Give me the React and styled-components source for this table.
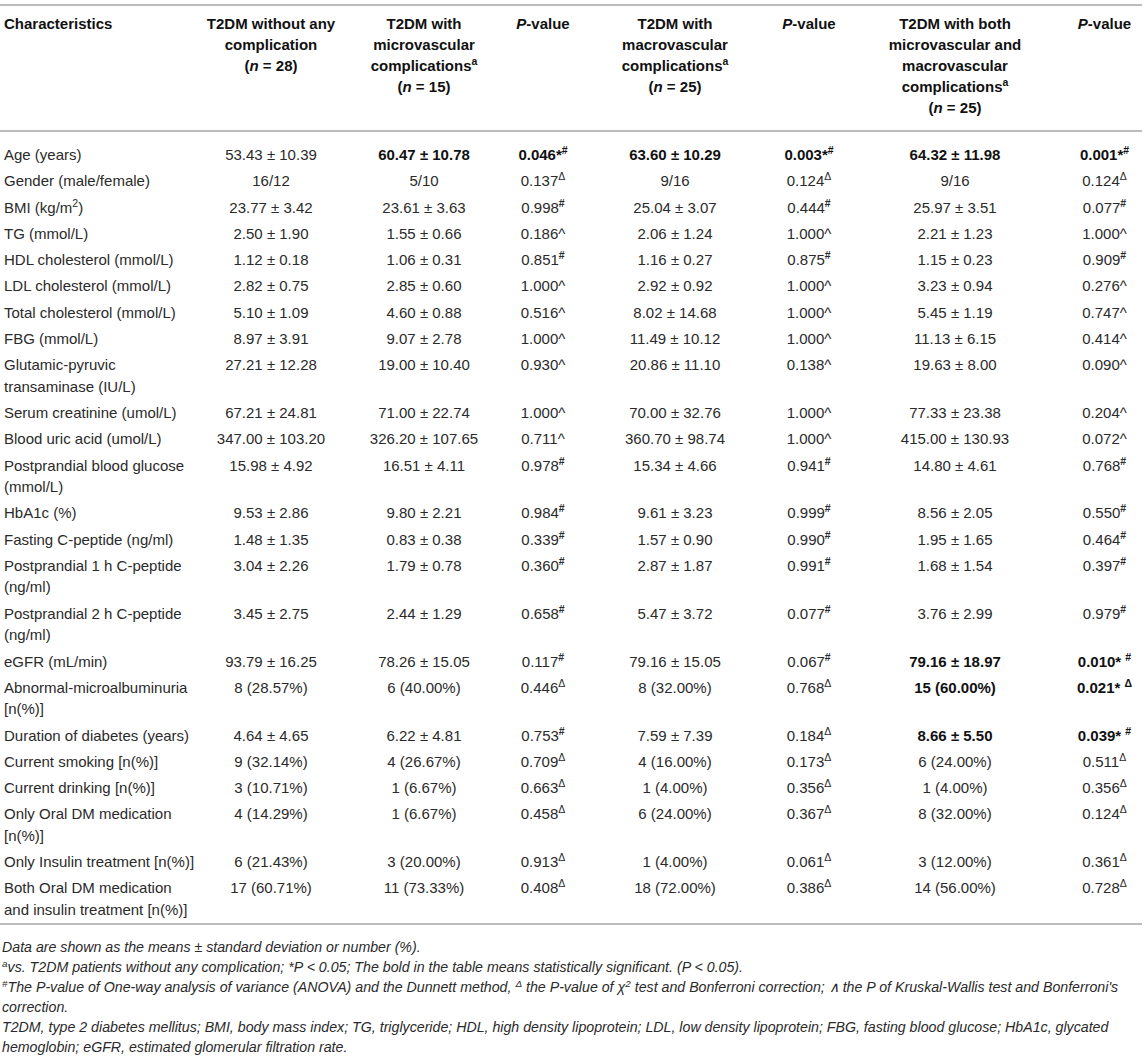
import React from 'react';
import styled, { createGlobalStyle } from 'styled-components';

const GlobalStyle = createGlobalStyle`
  body {
    margin: 0;
    background: #fff;
    font-family: "Liberation Sans", Arial, sans-serif;
  }
`;

const Page = styled.div`
  padding: 4px 2px 0 0;
  color: #2a2a2a;
`;

const Table = styled.table`
  width: 100%;
  table-layout: fixed;
  border-collapse: collapse;
  font-size: 15px;
  border-top: 2px solid #bdbdbd;
  border-bottom: 2px solid #bdbdbd;
`;

const Col = styled.col`
  width: ${({ $w }) => $w}px;
`;

const Th = styled.th`
  text-align: ${({ $left }) => ($left ? 'left' : 'center')};
  vertical-align: top;
  font-weight: 700;
  color: #111;
  line-height: 21px;
  padding: 7px ${({ $px }) => $px}px 12px;
  border-bottom: 2px solid #bdbdbd;
`;

const Body = styled.tbody`
  tr:first-child td {
    padding-top: 12px;
  }
`;

const Td = styled.td`
  text-align: center;
  vertical-align: top;
  line-height: 21.5px;
  padding: 2.4px 0;
  white-space: nowrap;
  font-weight: ${({ $bold }) => ($bold ? 700 : 400)};
  color: ${({ $bold }) => ($bold ? '#111' : '#2a2a2a')};
`;

const Label = styled(Td)`
  text-align: left;
  white-space: normal;
  padding-left: 4px;
  padding-right: 8px;
`;

const Sup = styled.sup`
  font-size: 0.7em;
  line-height: 0;
  vertical-align: 0.55em;
  font-weight: ${({ $heavy }) => ($heavy ? 700 : 'inherit')};
`;

const Notes = styled.div`
  padding: 12px 0 0 2px;
  font-size: 14.2px;
  font-style: italic;
  line-height: 20px;

  p {
    margin: 0;
  }
`;

// column widths, plus side padding of the header cell so the titles wrap like the print
const cols = [
  { w: 205, hp: 4 },
  { w: 132, hp: 0 },
  { w: 174, hp: 12 },
  { w: 64, hp: 0 },
  { w: 200, hp: 25 },
  { w: 68, hp: 0 },
  { w: 224, hp: 37 },
  { w: 75, hp: 0 },
];

const rows = [
  { label: 'Age (years)', cells: [
    { v: '53.43 ± 10.39' }, { v: '60.47 ± 10.78', b: true }, { v: '0.046', star: '*', m: '#', b: true },
    { v: '63.60 ± 10.29', b: true }, { v: '0.003', star: '*', m: '#', b: true },
    { v: '64.32 ± 11.98', b: true }, { v: '0.001', star: '*', m: '#', b: true },
  ] },
  { label: 'Gender (male/female)', cells: [
    { v: '16/12' }, { v: '5/10' }, { v: '0.137', m: 'Δ' },
    { v: '9/16' }, { v: '0.124', m: 'Δ' }, { v: '9/16' }, { v: '0.124', m: 'Δ' },
  ] },
  { label: <>BMI (kg/m<Sup>2</Sup>)</>, cells: [
    { v: '23.77 ± 3.42' }, { v: '23.61 ± 3.63' }, { v: '0.998', m: '#' },
    { v: '25.04 ± 3.07' }, { v: '0.444', m: '#' }, { v: '25.97 ± 3.51' }, { v: '0.077', m: '#' },
  ] },
  { label: 'TG (mmol/L)', cells: [
    { v: '2.50 ± 1.90' }, { v: '1.55 ± 0.66' }, { v: '0.186^' },
    { v: '2.06 ± 1.24' }, { v: '1.000^' }, { v: '2.21 ± 1.23' }, { v: '1.000^' },
  ] },
  { label: 'HDL cholesterol (mmol/L)', cells: [
    { v: '1.12 ± 0.18' }, { v: '1.06 ± 0.31' }, { v: '0.851', m: '#' },
    { v: '1.16 ± 0.27' }, { v: '0.875', m: '#' }, { v: '1.15 ± 0.23' }, { v: '0.909', m: '#' },
  ] },
  { label: 'LDL cholesterol (mmol/L)', cells: [
    { v: '2.82 ± 0.75' }, { v: '2.85 ± 0.60' }, { v: '1.000^' },
    { v: '2.92 ± 0.92' }, { v: '1.000^' }, { v: '3.23 ± 0.94' }, { v: '0.276^' },
  ] },
  { label: 'Total cholesterol (mmol/L)', cells: [
    { v: '5.10 ± 1.09' }, { v: '4.60 ± 0.88' }, { v: '0.516^' },
    { v: '8.02 ± 14.68' }, { v: '1.000^' }, { v: '5.45 ± 1.19' }, { v: '0.747^' },
  ] },
  { label: 'FBG (mmol/L)', cells: [
    { v: '8.97 ± 3.91' }, { v: '9.07 ± 2.78' }, { v: '1.000^' },
    { v: '11.49 ± 10.12' }, { v: '1.000^' }, { v: '11.13 ± 6.15' }, { v: '0.414^' },
  ] },
  { label: 'Glutamic-pyruvic transaminase (IU/L)', cells: [
    { v: '27.21 ± 12.28' }, { v: '19.00 ± 10.40' }, { v: '0.930^' },
    { v: '20.86 ± 11.10' }, { v: '0.138^' }, { v: '19.63 ± 8.00' }, { v: '0.090^' },
  ] },
  { label: 'Serum creatinine (umol/L)', cells: [
    { v: '67.21 ± 24.81' }, { v: '71.00 ± 22.74' }, { v: '1.000^' },
    { v: '70.00 ± 32.76' }, { v: '1.000^' }, { v: '77.33 ± 23.38' }, { v: '0.204^' },
  ] },
  { label: 'Blood uric acid (umol/L)', cells: [
    { v: '347.00 ± 103.20' }, { v: '326.20 ± 107.65' }, { v: '0.711^' },
    { v: '360.70 ± 98.74' }, { v: '1.000^' }, { v: '415.00 ± 130.93' }, { v: '0.072^' },
  ] },
  { label: 'Postprandial blood glucose (mmol/L)', cells: [
    { v: '15.98 ± 4.92' }, { v: '16.51 ± 4.11' }, { v: '0.978', m: '#' },
    { v: '15.34 ± 4.66' }, { v: '0.941', m: '#' }, { v: '14.80 ± 4.61' }, { v: '0.768', m: '#' },
  ] },
  { label: 'HbA1c (%)', cells: [
    { v: '9.53 ± 2.86' }, { v: '9.80 ± 2.21' }, { v: '0.984', m: '#' },
    { v: '9.61 ± 3.23' }, { v: '0.999', m: '#' }, { v: '8.56 ± 2.05' }, { v: '0.550', m: '#' },
  ] },
  { label: 'Fasting C-peptide (ng/ml)', cells: [
    { v: '1.48 ± 1.35' }, { v: '0.83 ± 0.38' }, { v: '0.339', m: '#' },
    { v: '1.57 ± 0.90' }, { v: '0.990', m: '#' }, { v: '1.95 ± 1.65' }, { v: '0.464', m: '#' },
  ] },
  { label: 'Postprandial 1 h C-peptide (ng/ml)', cells: [
    { v: '3.04 ± 2.26' }, { v: '1.79 ± 0.78' }, { v: '0.360', m: '#' },
    { v: '2.87 ± 1.87' }, { v: '0.991', m: '#' }, { v: '1.68 ± 1.54' }, { v: '0.397', m: '#' },
  ] },
  { label: 'Postprandial 2 h C-peptide (ng/ml)', cells: [
    { v: '3.45 ± 2.75' }, { v: '2.44 ± 1.29' }, { v: '0.658', m: '#' },
    { v: '5.47 ± 3.72' }, { v: '0.077', m: '#' }, { v: '3.76 ± 2.99' }, { v: '0.979', m: '#' },
  ] },
  { label: 'eGFR (mL/min)', cells: [
    { v: '93.79 ± 16.25' }, { v: '78.26 ± 15.05' }, { v: '0.117', m: '#' },
    { v: '79.16 ± 15.05' }, { v: '0.067', m: '#' }, { v: '79.16 ± 18.97', b: true }, { v: '0.010', star: '* ', m: '#', b: true },
  ] },
  { label: 'Abnormal-microalbuminuria [n(%)]', cells: [
    { v: '8 (28.57%)' }, { v: '6 (40.00%)' }, { v: '0.446', m: 'Δ' },
    { v: '8 (32.00%)' }, { v: '0.768', m: 'Δ' }, { v: '15 (60.00%)', b: true }, { v: '0.021', star: '* ', m: 'Δ', b: true },
  ] },
  { label: 'Duration of diabetes (years)', cells: [
    { v: '4.64 ± 4.65' }, { v: '6.22 ± 4.81' }, { v: '0.753', m: '#' },
    { v: '7.59 ± 7.39' }, { v: '0.184', m: 'Δ' }, { v: '8.66 ± 5.50', b: true }, { v: '0.039', star: '* ', m: '#', b: true },
  ] },
  { label: 'Current smoking [n(%)]', cells: [
    { v: '9 (32.14%)' }, { v: '4 (26.67%)' }, { v: '0.709', m: 'Δ' },
    { v: '4 (16.00%)' }, { v: '0.173', m: 'Δ' }, { v: '6 (24.00%)' }, { v: '0.511', m: 'Δ' },
  ] },
  { label: 'Current drinking [n(%)]', cells: [
    { v: '3 (10.71%)' }, { v: '1 (6.67%)' }, { v: '0.663', m: 'Δ' },
    { v: '1 (4.00%)' }, { v: '0.356', m: 'Δ' }, { v: '1 (4.00%)' }, { v: '0.356', m: 'Δ' },
  ] },
  { label: 'Only Oral DM medication [n(%)]', cells: [
    { v: '4 (14.29%)' }, { v: '1 (6.67%)' }, { v: '0.458', m: 'Δ' },
    { v: '6 (24.00%)' }, { v: '0.367', m: 'Δ' }, { v: '8 (32.00%)' }, { v: '0.124', m: 'Δ' },
  ] },
  { label: 'Only Insulin treatment [n(%)]', cells: [
    { v: '6 (21.43%)' }, { v: '3 (20.00%)' }, { v: '0.913', m: 'Δ' },
    { v: '1 (4.00%)' }, { v: '0.061', m: 'Δ' }, { v: '3 (12.00%)' }, { v: '0.361', m: 'Δ' },
  ] },
  { label: 'Both Oral DM medication and insulin treatment [n(%)]', cells: [
    { v: '17 (60.71%)' }, { v: '11 (73.33%)' }, { v: '0.408', m: 'Δ' },
    { v: '18 (72.00%)' }, { v: '0.386', m: 'Δ' }, { v: '14 (56.00%)' }, { v: '0.728', m: 'Δ' },
  ] },
];

const N = ({ n }) => (
  <>
    (<i>n</i> = {n})
  </>
);

const PHead = () => (
  <>
    <i>P</i>-value
  </>
);

const headers = [
  'Characteristics',
  <>
    T2DM without any complication
    <br />
    <N n={28} />
  </>,
  <>
    T2DM with microvascular complications<Sup>a</Sup>
    <br />
    <N n={15} />
  </>,
  <PHead />,
  <>
    T2DM with macrovascular complications<Sup>a</Sup>
    <br />
    <N n={25} />
  </>,
  <PHead />,
  <>
    T2DM with both microvascular and macrovascular complications<Sup>a</Sup>
    <br />
    <N n={25} />
  </>,
  <PHead />,
];

const App = () => {
  return (
    <Page>
      <GlobalStyle />
      <Table>
        <colgroup>
          {cols.map((c, i) => (
            <Col key={i} $w={c.w} />
          ))}
        </colgroup>
        <thead>
          <tr>
            {headers.map((h, i) => (
              <Th key={i} $left={i === 0} $px={cols[i].hp}>
                {h}
              </Th>
            ))}
          </tr>
        </thead>
        <Body>
          {rows.map((r, i) => (
            <tr key={i}>
              <Label>{r.label}</Label>
              {r.cells.map((c, j) => (
                <Td key={j} $bold={c.b}>
                  {c.v}
                  {c.star}
                  {c.m && <Sup $heavy={c.m === '#'}>{c.m}</Sup>}
                </Td>
              ))}
            </tr>
          ))}
        </Body>
      </Table>
      <Notes>
        <p>Data are shown as the means ± standard deviation or number (%).</p>
        <p>
          <Sup>a</Sup>vs. T2DM patients without any complication; *P &lt; 0.05; The bold in the table means
          statistically significant. (P &lt; 0.05).
        </p>
        <p>
          <Sup>#</Sup>The P-value of One-way analysis of variance (ANOVA) and the Dunnett method, <Sup>Δ</Sup> the
          P-value of χ<Sup>2</Sup> test and Bonferroni correction; ∧ the P of Kruskal-Wallis test and Bonferroni's
          correction.
        </p>
        <p>
          T2DM, type 2 diabetes mellitus; BMI, body mass index; TG, triglyceride; HDL, high density lipoprotein; LDL,
          low density lipoprotein; FBG, fasting blood glucose; HbA1c, glycated hemoglobin; eGFR, estimated glomerular
          filtration rate.
        </p>
      </Notes>
    </Page>
  );
};

export default App;
